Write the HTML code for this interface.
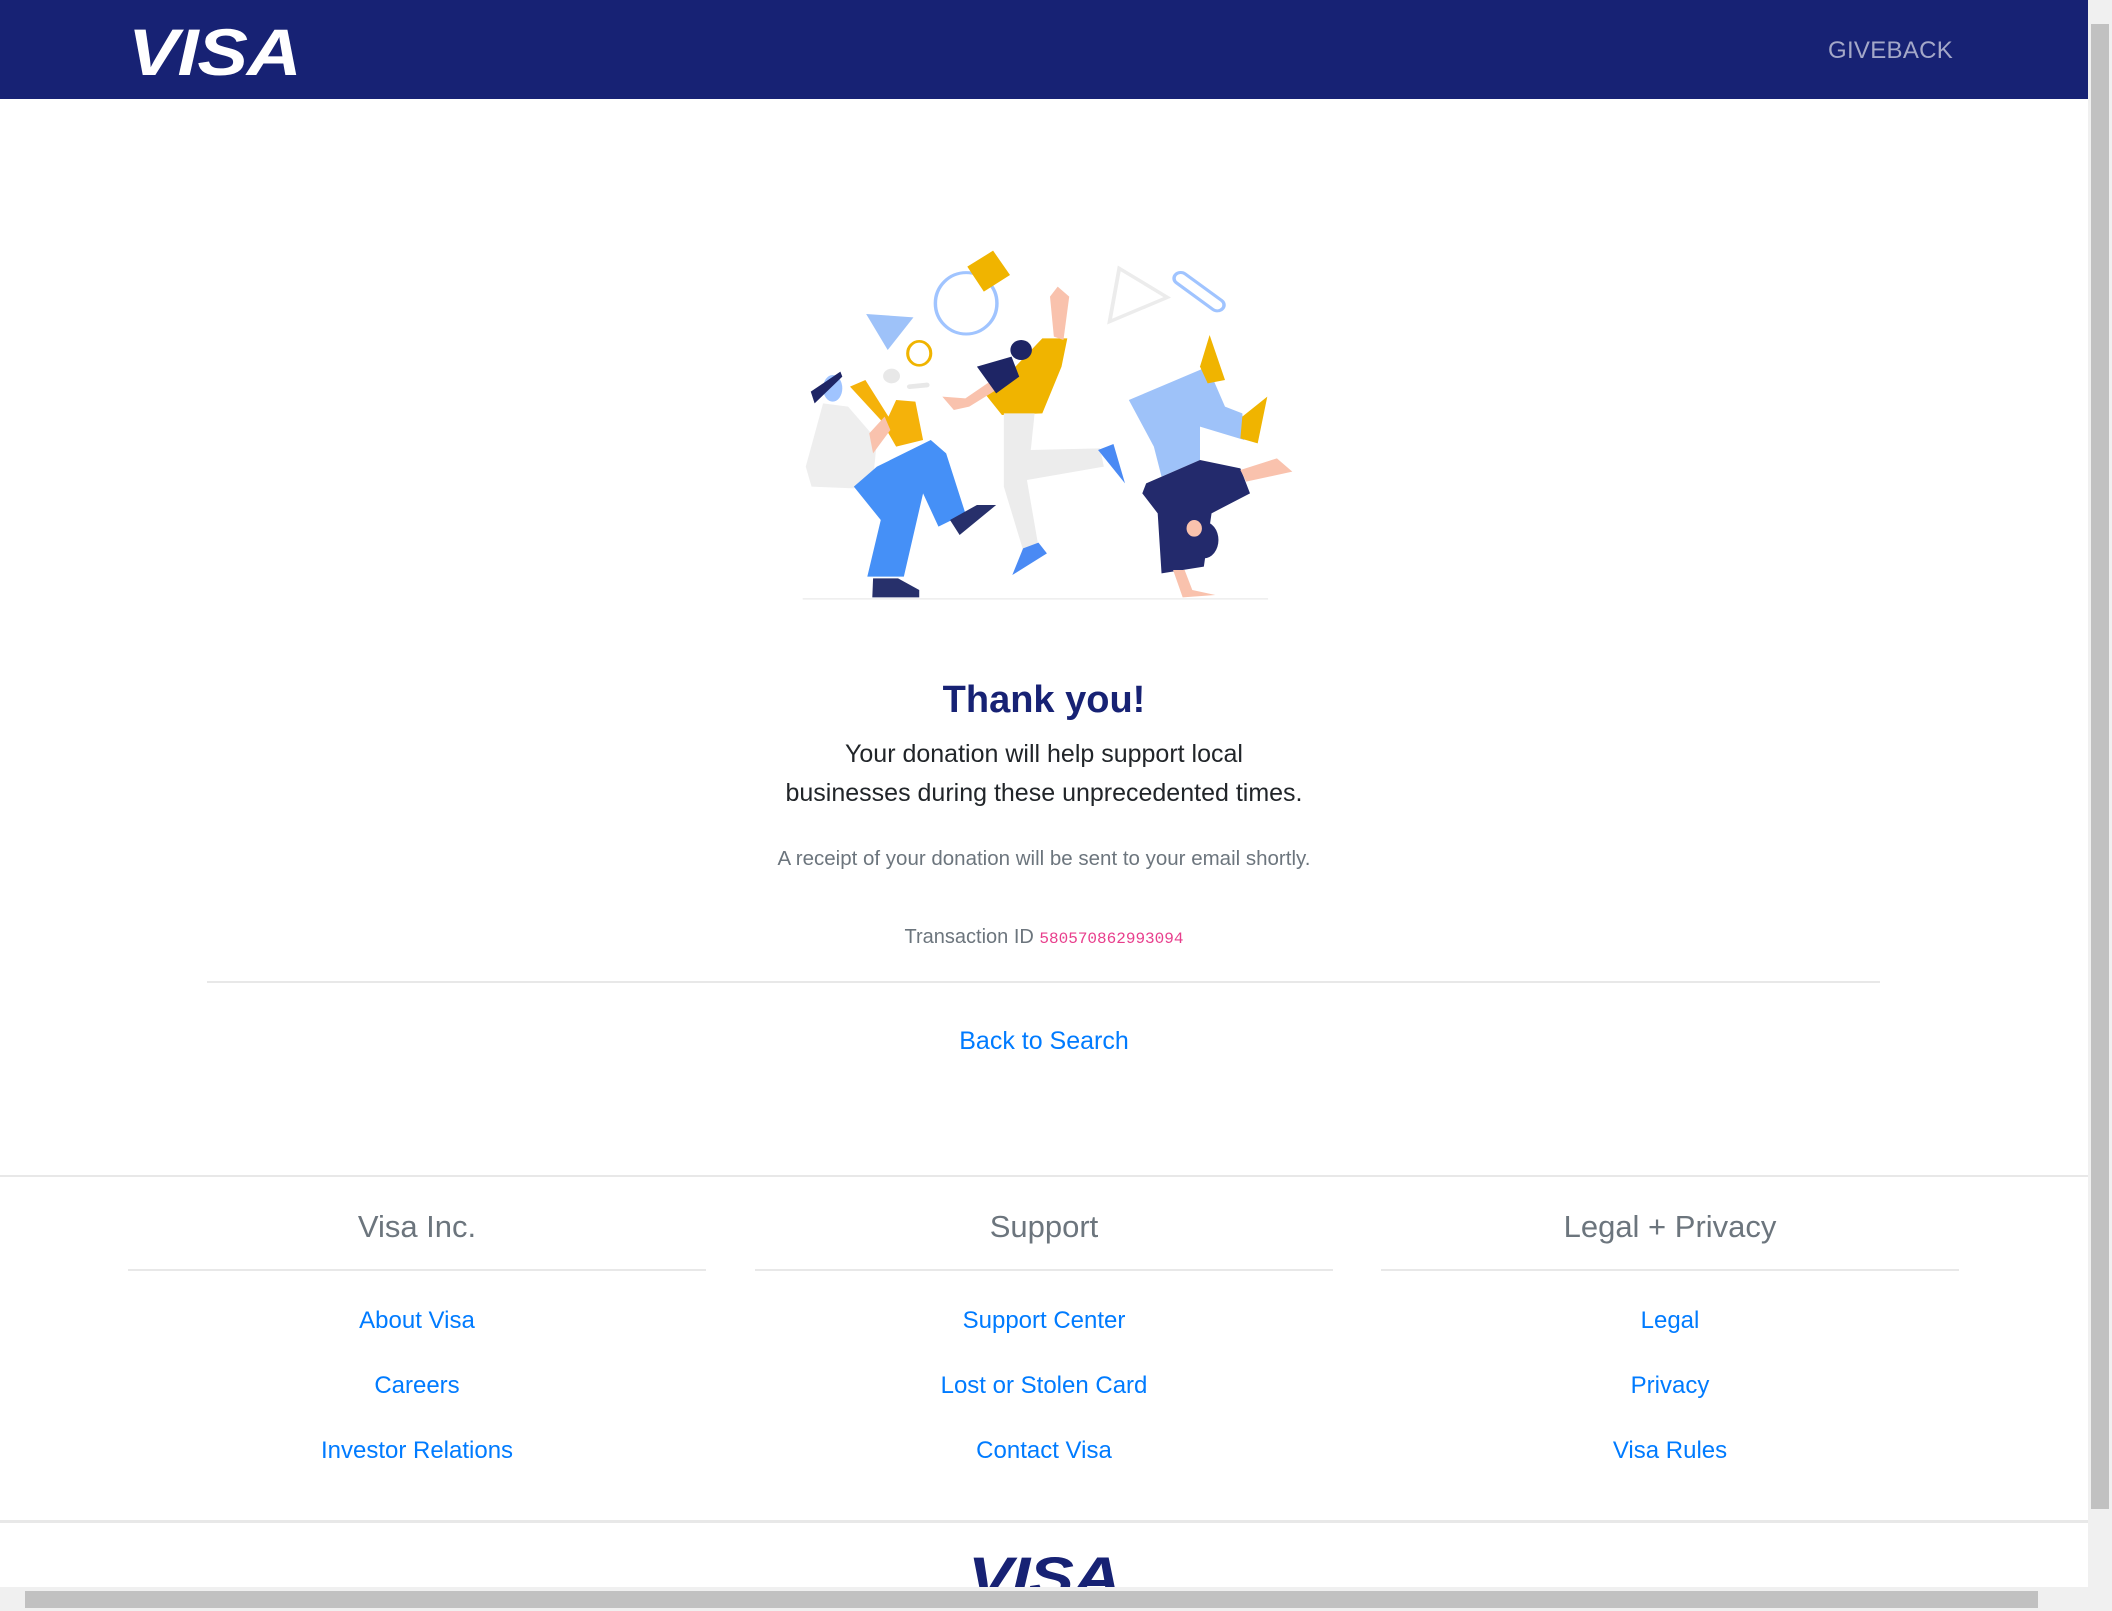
<!DOCTYPE html>
<html><head><meta charset="utf-8"><style>
*{margin:0;padding:0;box-sizing:border-box}
html,body{width:2112px;height:1611px;overflow:hidden;background:#fff;font-family:"Liberation Sans",sans-serif}
.page{position:absolute;left:0;top:0;width:2088px;height:1587px;overflow:hidden}
.hdr{position:absolute;left:0;top:0;width:2088px;height:99px;background:#172274}
.logo{position:absolute;font-family:"Liberation Sans",sans-serif;font-weight:bold;font-style:italic;letter-spacing:-1px;transform-origin:0 0}
.give{position:absolute;left:1828px;top:37px;font-size:24px;color:#a4a8c8;letter-spacing:0.3px}
.c{position:absolute;left:0;width:2088px;text-align:center}
a{color:#007bff;text-decoration:none}
.hr{position:absolute;height:2px;background:#e8e8e8}
.col{position:absolute;width:578px;text-align:center}
.col h3{font-weight:normal;font-size:31px;color:#6c757d;height:66px;line-height:44px;border-bottom:2px solid #e8e8e8}
.col a{display:block;font-size:24px;height:65px;line-height:65px}
.vs{position:absolute;left:2088px;top:0;width:24px;height:1611px;background:#f0f0f0}
.hs{position:absolute;left:0;top:1587px;width:2088px;height:24px;background:#f0f0f0}
</style></head><body>
<div class="page">
<div class="hdr">
 <div class="logo" style="left:128px;top:14px;font-size:66px;color:#fff;transform:scaleX(1.15)">VISA</div>
 <div class="give">GIVEBACK</div>
</div>
<svg style="position:absolute;left:750px;top:220px" width="600" height="400" viewBox="0 0 1560 1200" preserveAspectRatio="none">
 <ellipse cx="562" cy="250" rx="80" ry="92" fill="none" stroke="#a0c4ff" stroke-width="9"/>
 <polygon points="565,140 632,92 676,165 608,215" fill="#f0b400"/>
 <polygon points="302,282 425,292 358,390" fill="#9ec2f9"/>
 <ellipse cx="440" cy="400" rx="30" ry="36" fill="none" stroke="#f0b400" stroke-width="8"/>
 <polygon points="960,145 1085,232 935,305" fill="none" stroke="#ececec" stroke-width="10"/>
 <line x1="1120" y1="175" x2="1215" y2="255" stroke="#a0c4ff" stroke-width="44" stroke-linecap="round"/>
 <line x1="1120" y1="175" x2="1215" y2="255" stroke="#fff" stroke-width="26" stroke-linecap="round"/>
 <circle cx="368" cy="468" r="22" fill="#e8e8e8"/>
 <line x1="415" y1="500" x2="460" y2="495" stroke="#e8e8e8" stroke-width="14" stroke-linecap="round"/>
 <path d="M190,550 L255,560 L330,660 L320,780 L270,805 L160,800 L145,740 Z" fill="#eee"/>
 <path d="M260,500 L300,480 L360,590 L380,540 L430,545 L450,660 L380,680 L340,600 Z" fill="#f5b20a"/>
 <path d="M270,800 L330,740 L470,660 L510,700 L560,880 L490,920 L450,820 L400,1070 L305,1070 L340,900 Z" fill="#4590f7"/>
 <path d="M320,1075 L385,1075 L440,1110 L440,1132 L318,1132 Z" fill="#27306b"/>
 <path d="M520,900 L590,855 L640,855 L545,945 Z" fill="#27306b"/>
 <ellipse cx="215" cy="505" rx="25" ry="40" fill="#a0c4ff"/>
 <polygon points="158,515 235,455 240,470 168,550" fill="#1e2565"/>
 <path d="M310,640 L350,590 L365,630 L320,700 Z" fill="#f9c2ad"/>
 <path d="M610,520 L690,440 L760,355 L825,355 L810,440 L760,580 L655,585 Z" fill="#f0b400"/>
 <path d="M790,350 L780,230 L800,200 L830,230 L815,360 Z" fill="#f9c2ad"/>
 <path d="M500,530 L560,535 L630,480 L640,510 L570,560 L530,570 Z" fill="#f9c2ad"/>
 <path d="M590,440 L680,410 L700,470 L640,520 Z" fill="#1e2565"/>
 <ellipse cx="705" cy="390" rx="28" ry="30" fill="#1e2565"/>
 <path d="M660,580 L740,580 L730,690 L910,685 L920,740 L720,780 L750,980 L710,990 L660,800 Z" fill="#ececec"/>
 <path d="M905,690 L945,672 L975,790 Z" fill="#4a8af4"/>
 <path d="M710,985 L750,968 L772,1000 L682,1065 Z" fill="#4a8af4"/>
 <path d="M985,540 L1190,440 L1235,560 L1280,580 L1285,660 L1170,620 L1170,720 L1070,770 L1050,680 Z" fill="#9ec2f9"/>
 <path d="M1170,440 L1195,345 L1235,480 L1190,490 Z" fill="#f0b400"/>
 <path d="M1280,590 L1345,530 L1320,670 L1275,655 Z" fill="#f0b400"/>
 <path d="M1030,790 L1170,720 L1275,745 L1300,820 L1200,880 L1180,1040 L1070,1060 L1060,880 L1020,820 Z" fill="#232a6c"/>
 <path d="M1275,750 L1370,715 L1410,755 L1290,785 Z" fill="#f9c2ad"/>
 <path d="M1100,1050 L1130,1050 L1150,1110 L1210,1125 L1125,1132 Z" fill="#f9c2ad"/>
 <ellipse cx="1180" cy="960" rx="38" ry="55" fill="#232a6c"/>
 <ellipse cx="1155" cy="925" rx="20" ry="25" fill="#f9c2ad"/>
 <rect x="137" y="1134" width="1210" height="5" fill="#efefef"/>
</svg>
<div class="c" style="top:679px;font-size:38px;font-weight:bold;color:#172274">Thank you!</div>
<div class="c" style="top:735px;font-size:25px;line-height:39px;color:#212529">Your donation will help support local<br>businesses during these unprecedented times.</div>
<div class="c" style="top:847px;font-size:20.5px;color:#6c757d">A receipt of your donation will be sent to your email shortly.</div>
<div class="c" style="top:926px;font-size:20px;color:#6c757d">Transaction ID <span style="font-family:'Liberation Mono',monospace;font-size:16px;color:#e83e8c">580570862993094</span></div>
<div class="hr" style="left:207px;top:981px;width:1673px"></div>
<div class="c" style="top:1027px;font-size:25px"><a>Back to Search</a></div>
<div class="hr" style="left:0;top:1175px;width:2088px"></div>
<div class="col" style="left:128px;top:1205px"><h3>Visa Inc.</h3><div style="height:17px"></div><a>About Visa</a><a>Careers</a><a>Investor Relations</a></div>
<div class="col" style="left:755px;top:1205px"><h3>Support</h3><div style="height:17px"></div><a>Support Center</a><a>Lost or Stolen Card</a><a>Contact Visa</a></div>
<div class="col" style="left:1381px;top:1205px"><h3>Legal + Privacy</h3><div style="height:17px"></div><a>Legal</a><a>Privacy</a><a>Visa Rules</a></div>
<div class="hr" style="left:0;top:1520px;width:2088px;height:3px"></div>
<div class="logo" style="left:968px;top:1544px;font-size:56px;color:#172274;transform:scaleX(1.2)">VISA</div>
</div>
<div class="vs"><div style="position:absolute;left:3px;top:24px;width:18px;height:1485px;background:#c1c1c1"></div></div>
<div class="hs"><div style="position:absolute;left:25px;top:4px;width:2013px;height:17px;background:#c1c1c1"></div></div>
</body></html>
